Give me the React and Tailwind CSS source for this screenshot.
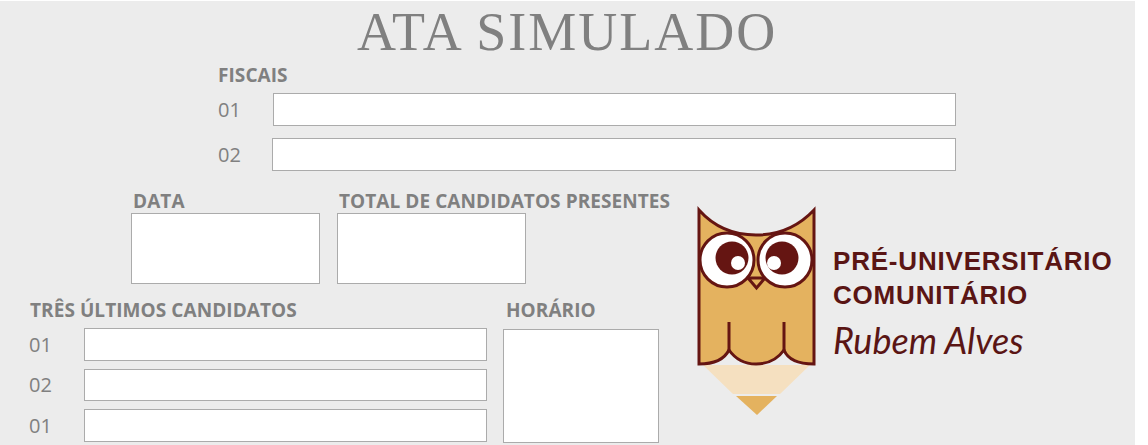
const labelFont = "font-['Open_Sans','Noto_Sans',sans-serif]";
const labelText = "text-[19px] font-bold tracking-[0.07px] whitespace-nowrap text-[#808080]";

const Box = ({ className }) => (
  <div className={`bg-white border border-[#ababab] ${className}`} />
);

const NumberedRow = ({ num, numWidth, boxClass }) => (
  <div className="flex items-center">
    <span className={`text-[20px] leading-none text-[#808080] ${numWidth}`}>{num}</span>
    <Box className={boxClass} />
  </div>
);

const OwlLogo = () => (
  <svg width="140" height="225" viewBox="0 0 140 225" className="block shrink-0">
    {/* pencil tip */}
    <path d="M13 165 L120 165 L90 194 L43 194 Z" fill="#f5e0c0" />
    <path d="M46 196 L87 196 L67 215 Z" fill="#e4b25f" />
    {/* body */}
    <path
      d="M9 10 C25 28 45 35 66 35 C87 35 107 28 124 10 L124 164 C109 164 98 160 94 150 C87 160 77 164 66 164 C55 164 46 160 39 150 C34 160 23 164 9 164 Z"
      fill="#e4b25f"
      stroke="#651512"
      strokeWidth="3"
    />
    <path d="M39 122 L39 150 M94 122 L94 150" stroke="#651512" strokeWidth="3" fill="none" />
    {/* beak */}
    <path d="M58 78 L66.5 88 L75 78 Z" fill="#e4b25f" stroke="#651512" strokeWidth="3" />
    {/* eyes */}
    <circle cx="37" cy="60" r="27" fill="#fff" stroke="#651512" strokeWidth="3" />
    <circle cx="95" cy="60" r="27" fill="#fff" stroke="#651512" strokeWidth="3" />
    <circle cx="42" cy="58" r="16.5" fill="#651512" />
    <circle cx="92" cy="58" r="16.5" fill="#651512" />
    <circle cx="48" cy="63" r="7" fill="#fff" />
    <circle cx="84" cy="63" r="7" fill="#fff" />
  </svg>
);

export default function App() {
  return (
    <div className="w-[1148px] h-[445px] overflow-hidden bg-white pt-px">
      <div className={`w-[1135px] h-[444px] overflow-hidden bg-[#ececec] ${labelFont}`}>
        <h1 className="h-[61px] pt-[1px] pl-[357px] font-['Liberation_Serif',serif] text-[54px] leading-[60px] tracking-[2px] font-normal text-[#808080] whitespace-nowrap">
          ATA SIMULADO
        </h1>

        <div className="pl-[218px]">
          <div className={`h-[31px] pt-[2px] leading-[22px] ${labelText}`}>FISCAIS</div>
          <div className="flex flex-col gap-[12px]">
            <NumberedRow num="01" numWidth="w-[55px]" boxClass="w-[683px] h-[33px]" />
            <NumberedRow num="02" numWidth="w-[54px]" boxClass="w-[684px] h-[33px]" />
          </div>
        </div>

        <div className="flex">
          <div className="w-[690px] shrink-0">
            <div className="flex pl-[131px] pt-[19px] gap-[17px]">
              <div>
                <div className={`h-[23px] pl-[2px] leading-[23px] ${labelText}`}>DATA</div>
                <Box className="w-[189px] h-[71px]" />
              </div>
              <div>
                <div className={`h-[23px] pl-[2px] leading-[23px] ${labelText}`}>
                  TOTAL DE CANDIDATOS PRESENTES
                </div>
                <Box className="w-[189px] h-[71px]" />
              </div>
            </div>

            <div className="flex pl-[29px] pt-[14px]">
              <div className="w-[474px] shrink-0">
                <div className={`h-[30px] pl-px leading-[24px] ${labelText}`}>TRÊS ÚLTIMOS CANDIDATOS</div>
                <div className="flex flex-col gap-[8px]">
                  <NumberedRow num="01" numWidth="w-[55px]" boxClass="w-[403px] h-[33px]" />
                  <NumberedRow num="02" numWidth="w-[55px]" boxClass="w-[403px] h-[32px]" />
                  <NumberedRow num="01" numWidth="w-[55px]" boxClass="w-[403px] h-[33px]" />
                </div>
              </div>
              <div>
                <div className={`h-[31px] pl-[3px] leading-[24px] ${labelText}`}>HORÁRIO</div>
                <Box className="w-[156px] h-[114px]" />
              </div>
            </div>
          </div>

          <div className="flex pt-[29px]">
            <OwlLogo />
            <div className="pl-[3px] pt-[44px]">
              <div className="font-['Liberation_Sans',sans-serif] text-[26px] leading-[34px] font-bold tracking-[0.8px] text-[#5a1514] whitespace-nowrap">
                PRÉ-UNIVERSITÁRIO
                <br />
                COMUNITÁRIO
              </div>
              <div className="pt-[6px] font-['Lato',sans-serif] italic text-[36px] leading-[44px] font-normal text-[#5a1514] whitespace-nowrap">
                Rubem Alves
              </div>
            </div>
          </div>
        </div>
      </div>
    </div>
  );
}
